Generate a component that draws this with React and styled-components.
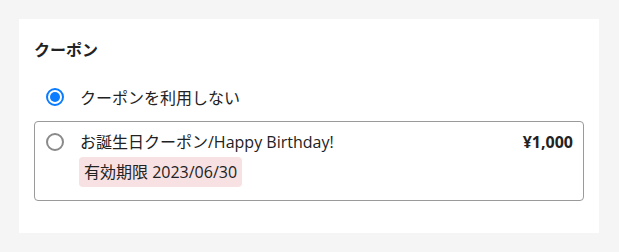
import styled, { createGlobalStyle } from "styled-components";

const GlobalStyle = createGlobalStyle`
  body {
    margin: 0;
    background: #f5f5f5;
    font-family: "Open Sans", "Noto Sans CJK JP", sans-serif;
    font-size: 16px;
    color: #222;
  }
`;

const Card = styled.section`
  margin: 19px 0 0 19px;
  width: 580px;
  height: 214px;
  box-sizing: border-box;
  padding: 19px 15px 0;
  background: #fff;
`;

const Title = styled.h2`
  margin: 0;
  font-size: 16px;
  line-height: 24px;
  font-weight: 700;
`;

const Option = styled.label`
  display: flex;
  align-items: center;
  gap: 16px;
  box-sizing: border-box;
  padding: 0 12px;
  height: 40px;
  margin-top: 15px;
  cursor: pointer;
`;

const Radio = styled.span`
  flex: none;
  width: 18px;
  height: 18px;
  box-sizing: border-box;
  border-radius: 50%;
  border: 2px solid ${({ checked }) => (checked ? "#0a7cff" : "#8a8a8a")};
  display: flex;
  align-items: center;
  justify-content: center;
  &::after {
    content: "";
    width: 10px;
    height: 10px;
    border-radius: 50%;
    background: ${({ checked }) => (checked ? "#0a7cff" : "transparent")};
  }
`;

const CouponBox = styled.label`
  display: flex;
  gap: 16px;
  margin-top: 4px;
  height: 80px;
  box-sizing: border-box;
  padding: 11px 10px 0 11px;
  border: 1px solid #9a9a9a;
  border-radius: 4px;
  cursor: pointer;
`;

const Body = styled.div`
  flex: 1;
  display: flex;
  flex-direction: column;
  align-items: flex-start;
`;

const Head = styled.div`
  display: flex;
  justify-content: space-between;
  width: 100%;
  line-height: 20px;
  margin-top: -1px;
`;

const Price = styled.span`
  font-weight: 700;
`;

const Tag = styled.span`
  margin-top: 5px;
  margin-left: -1px;
  height: 30px;
  line-height: 30px;
  padding: 0 5px;
  border-radius: 4px;
  background: #f7e1e3;
`;

export default function App() {
  return (
    <>
      <GlobalStyle />
      <Card>
        <Title>クーポン</Title>
        <Option>
          <Radio checked />
          クーポンを利用しない
        </Option>
        <CouponBox>
          <Radio />
          <Body>
            <Head>
              <span>お誕生日クーポン/Happy Birthday!</span>
              <Price>¥1,000</Price>
            </Head>
            <Tag>有効期限 2023/06/30</Tag>
          </Body>
        </CouponBox>
      </Card>
    </>
  );
}
